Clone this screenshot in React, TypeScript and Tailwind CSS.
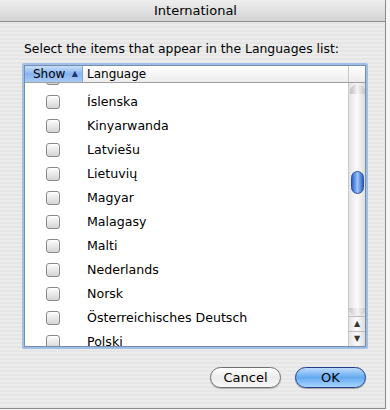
import React from "react";

const languages = [
  "Íslenska",
  "Kinyarwanda",
  "Latviešu",
  "Lietuvių",
  "Magyar",
  "Malagasy",
  "Malti",
  "Nederlands",
  "Norsk",
  "Österreichisches Deutsch",
  "Polski",
];

const font = { fontFamily: '"DejaVu Sans", "Lucida Grande", Verdana, sans-serif' };

function Checkbox() {
  return (
    <div className="h-[14px] w-[14px] shrink-0 rounded-[3px] border border-[#8a8a8a] bg-gradient-to-b from-[#fdfdfd] via-[#e9e9e9] to-[#d4d4d4] shadow-[inset_0_1px_0_#fff]" />
  );
}

function Row({ label }: { label?: string }) {
  return (
    <div className="flex h-6 items-center pl-[21px]">
      <Checkbox />
      {label && <span className="ml-[27px] text-[12.6px] text-black">{label}</span>}
    </div>
  );
}

function Scrollbar() {
  return (
    <div className="flex w-[17px] flex-col border-l border-[#c8c8c8] bg-gradient-to-r from-[#e4e4e4] via-[#fafafa] to-[#dedede]">
      <div className="relative flex-1">
        <div className="mx-auto mt-[1px] h-[10px] w-[15px] rounded-t-full bg-gradient-to-r from-[#bdbdbd] via-[#f4f4f4] to-[#c4c4c4]" />
        <div className="absolute left-[2px] top-[88px] h-[23px] w-[13px] rounded-full border border-[#2a4f9c] bg-gradient-to-r from-[#2d63c9] via-[#9cc4f5] to-[#2d63c9]" />
        <div className="absolute bottom-0 left-0 h-[8px] w-[17px] rounded-b-full bg-gradient-to-r from-[#c6c6c6] via-[#f4f4f4] to-[#c6c6c6]" />
      </div>
      <div className="flex h-[15px] items-center justify-center border-t border-[#bdbdbd] text-[8px] leading-none text-[#333]">
        ▲
      </div>
      <div className="flex h-[15px] items-center justify-center border-t border-[#bdbdbd] text-[8px] leading-none text-[#333]">
        ▼
      </div>
    </div>
  );
}

export default function App() {
  return (
    <div className="h-[410px] w-[390px] overflow-hidden bg-[#f6f6f6]" style={font}>
      <div className="flex h-[409px] w-[386px] flex-col border-b border-r border-[#8c8c8c] bg-[repeating-linear-gradient(180deg,#ececec_0px,#ececec_2px,#e6e6e6_2px,#e6e6e6_4px)]">
        <div className="flex h-[22px] items-center justify-center border-b border-[#8f8f8f] bg-gradient-to-b from-[#eeeeee] to-[#d3d3d3] pl-[6px] text-[13px] text-black">
          International
        </div>

        <p className="mt-[19px] pl-[24px] text-[12.4px] leading-[16px] text-black">
          Select the items that appear in the Languages list:
        </p>

        <div className="ml-[22px] mt-[6px] h-[286px] w-[346px] rounded-[2px] bg-[#9dbfe8] p-[2px]">
          <div className="flex h-full w-full flex-col border border-[#7a8da8] bg-white">
            <div className="relative z-10 flex h-[17px] items-stretch border-b border-[#a0a0a0] text-[12px] leading-none">
              <div className="flex w-[58px] items-center justify-between border-r border-[#8aa6cf] bg-gradient-to-b from-[#c9def8] via-[#86b3ef] to-[#a9cbf6] pl-[8px] pr-[4px] text-black">
                <span>Show</span>
                <span className="text-[8px] text-[#1d3a70]">▲</span>
              </div>
              <div className="flex flex-1 items-center bg-gradient-to-b from-[#ffffff] to-[#ececec] pl-[4px] text-black">
                Language
              </div>
              <div className="w-[17px] border-l border-[#c8c8c8] bg-gradient-to-b from-[#ffffff] to-[#ececec]" />
            </div>
            <div className="flex flex-1 overflow-hidden">
              <div className="relative flex-1 overflow-hidden">
                <div className="-mt-[17px]">
                  <Row />
                  {languages.map((l) => (
                    <Row key={l} label={l} />
                  ))}
                </div>
              </div>
              <Scrollbar />
            </div>
          </div>
        </div>

        <div className="mt-[18px] flex justify-end gap-[14px] pr-[19px]">
          <button className="h-[21px] w-[71px] rounded-full border border-[#707070] bg-gradient-to-b from-[#ffffff] via-[#ececec] to-[#f8f8f8] text-[13px] text-black shadow-[0_1px_1px_rgba(0,0,0,0.25)]">
            Cancel
          </button>
          <button className="h-[21px] w-[71px] rounded-full border border-[#203f8c] bg-gradient-to-b from-[#b9dbfb] via-[#64aaf1] to-[#a7d5fb] text-[13px] text-black shadow-[0_1px_1px_rgba(0,0,0,0.3)]">
            OK
          </button>
        </div>
      </div>
    </div>
  );
}
